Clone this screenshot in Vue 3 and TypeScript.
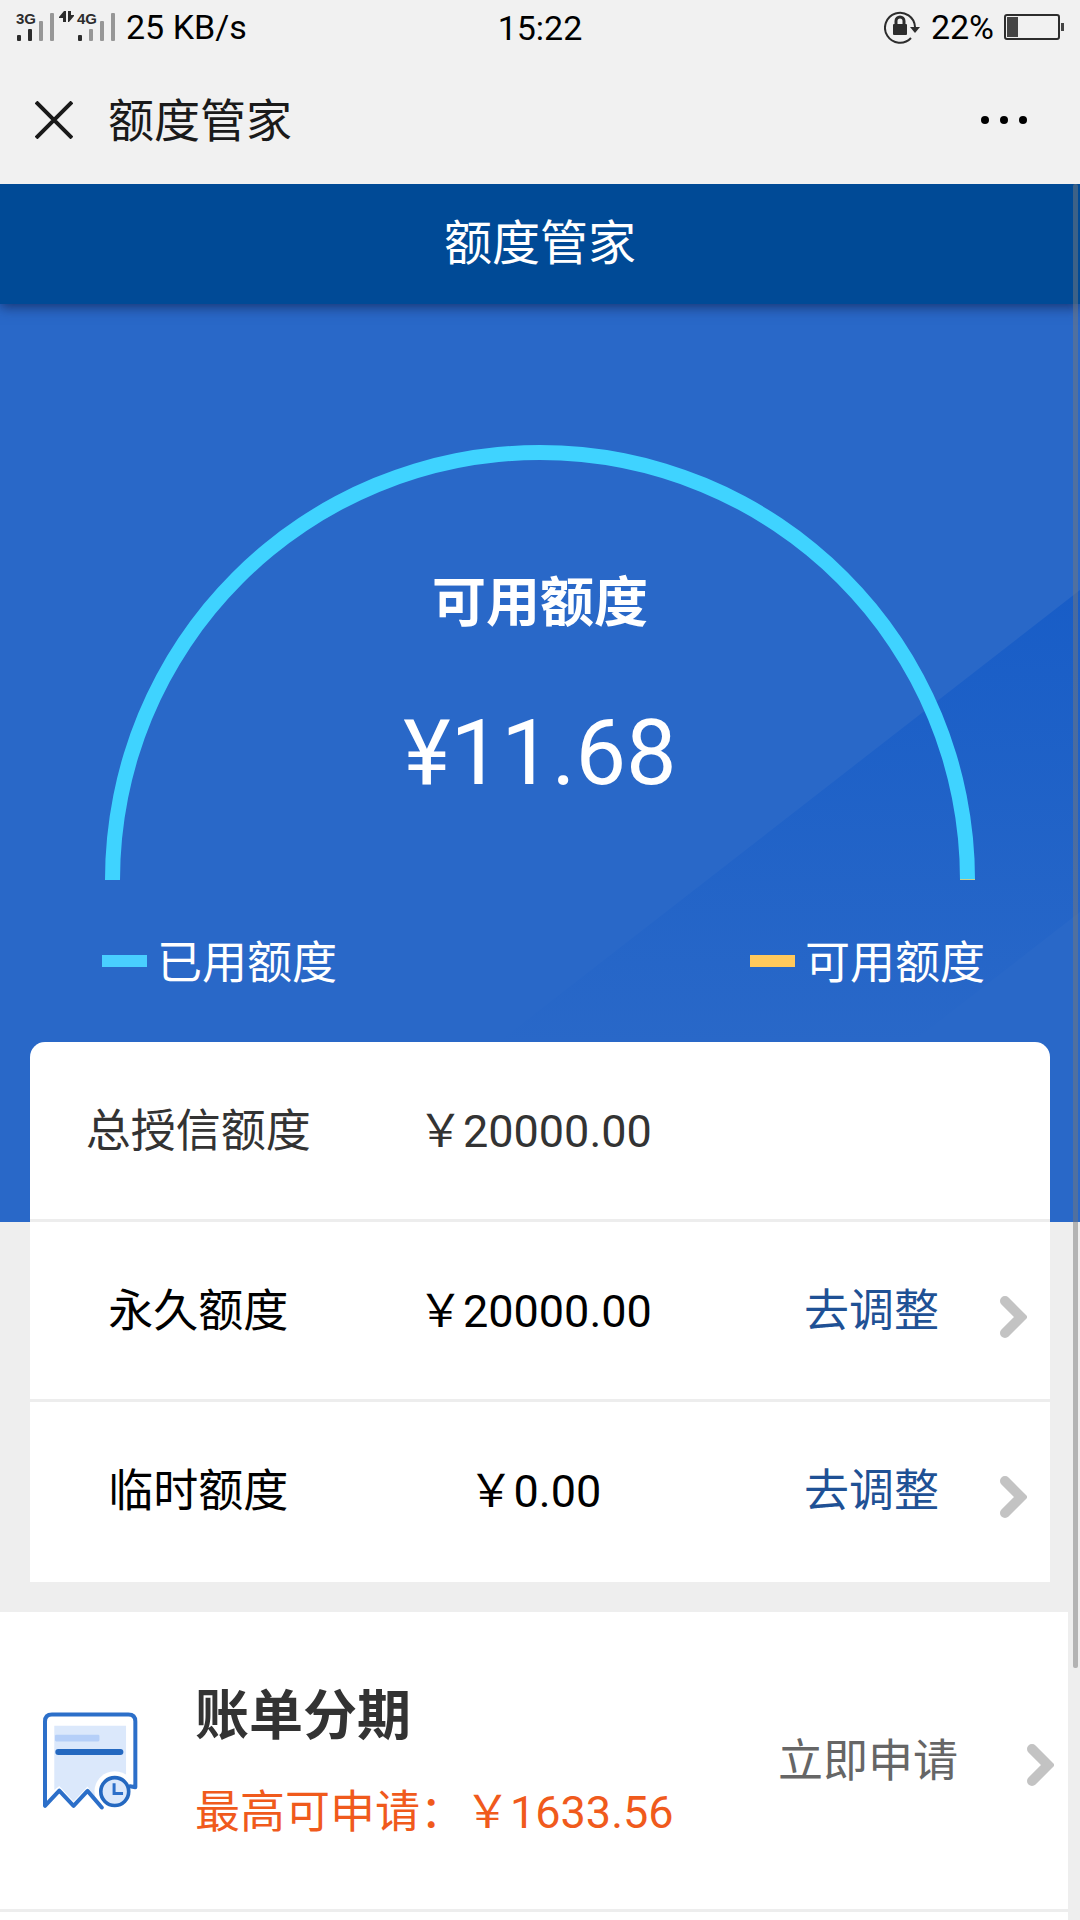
<script setup lang="ts">
interface LimitRow {
  label: string
  value: string
  action?: string
}

const rows: LimitRow[] = [
  { label: '总授信额度', value: '￥20000.00' },
  { label: '永久额度', value: '￥20000.00', action: '去调整' },
  { label: '临时额度', value: '￥0.00', action: '去调整' },
]

const legend = [
  { label: '已用额度', tone: 'used' },
  { label: '可用额度', tone: 'free' },
]
</script>

<template>
  <div class="app">
    <div class="status">
      <div class="status-left">
        <svg class="signal" width="102" height="32" viewBox="0 0 102 32" aria-hidden="true">
          <g fill="#2d2d2d">
            <text x="0" y="13" class="net">3G</text>
            <rect x="1" y="24" width="4" height="6" rx="1" />
            <rect x="12" y="18" width="4" height="12" rx="1" />
            <path d="M43 6L48 0H50V11H47V7H43Z" />
            <path d="M52 0H55V4H58V5L53 11H52Z" />
            <text x="61" y="13" class="net">4G</text>
            <rect x="62" y="24" width="4" height="6" rx="1" />
          </g>
          <g fill="#979797">
            <rect x="23" y="10" width="4" height="20" rx="1" />
            <rect x="34" y="2" width="4" height="28" rx="1" />
            <rect x="73" y="18" width="4" height="12" rx="1" />
            <rect x="84" y="10" width="4" height="20" rx="1" />
            <rect x="95" y="2" width="4" height="28" rx="1" />
          </g>
        </svg>
        <span>25 KB/s</span>
      </div>
      <span class="clock">15:22</span>
      <div class="status-right">
        <svg width="37" height="34" viewBox="0 0 37 34" aria-hidden="true">
          <path d="M27 28A15 15 0 1 1 31 17" fill="none" stroke="#2d2d2d" stroke-width="2" />
          <path d="M26 17H36L31 23Z" fill="#2d2d2d" />
          <rect x="9" y="14" width="14" height="11" rx="1" fill="#2d2d2d" />
          <path d="M12 15V11A4 4 0 0 1 20 11V15" fill="none" stroke="#2d2d2d" stroke-width="3" />
        </svg>
        <span>22%</span>
        <svg class="battery" width="60" height="26" viewBox="0 0 60 26" aria-hidden="true">
          <rect x="1" y="1" width="54" height="24" rx="2" fill="none" stroke="#2d2d2d" stroke-width="2" />
          <rect x="3" y="3" width="11" height="20" fill="#454545" />
          <rect x="57" y="9" width="3" height="8" fill="#454545" />
        </svg>
      </div>
    </div>

    <header class="titlebar">
      <button class="icon-btn" type="button" aria-label="关闭">
        <svg width="38" height="38" viewBox="0 0 38 38">
          <path d="M1 1L37 37M37 1L1 37" stroke="#1a1a1a" stroke-width="4" />
        </svg>
      </button>
      <span class="titlebar-text">额度管家</span>
      <button class="icon-btn" type="button" aria-label="更多">
        <svg width="48" height="10" viewBox="0 0 48 10">
          <circle cx="5" cy="5" r="4" />
          <circle cx="24" cy="5" r="4" />
          <circle cx="43" cy="5" r="4" />
        </svg>
      </button>
    </header>

    <main class="page">
      <h1 class="heading">额度管家</h1>

      <section class="hero">
        <svg class="sheen" viewBox="0 0 1080 918" preserveAspectRatio="none" aria-hidden="true">
          <defs>
            <linearGradient id="sheen" gradientUnits="userSpaceOnUse" x1="0" y1="288" x2="0" y2="740">
              <stop offset="0" stop-color="#185dc7" />
              <stop offset="1" stop-color="#185dc7" stop-opacity="0" />
            </linearGradient>
          </defs>
          <path d="M1080 286L496 740H910L1080 608Z" fill="url(#sheen)" />
        </svg>
        <div class="gauge">
          <svg class="arc" viewBox="0 0 870 435" aria-hidden="true">
            <path d="M0 435A435 435 0 0 1 870 435H855A420 420 0 0 0 15 435Z" fill="#3fd3ff" />
            <rect x="855" y="434" width="15" height="1" fill="#c9d08c" />
          </svg>
          <div class="gauge-text">
            <h2>可用额度</h2>
            <p>¥11.68</p>
          </div>
        </div>
        <ul class="legend">
          <li v-for="item in legend" :key="item.tone">
            <i :class="item.tone"></i>{{ item.label }}
          </li>
        </ul>
      </section>

      <table class="card">
        <tbody>
          <tr v-for="row in rows" :key="row.label">
            <th scope="row">{{ row.label }}</th>
            <td>{{ row.value }}</td>
            <td>
              <a v-if="row.action" href="#" class="adjust">
                <span>{{ row.action }}</span>
                <svg class="chevron" width="28" height="44" viewBox="0 0 28 44" aria-hidden="true">
                  <path d="M6 6L22 22L6 38" />
                </svg>
              </a>
            </td>
            <td></td>
          </tr>
        </tbody>
      </table>

      <a href="#" class="offer">
        <svg class="receipt" width="95" height="98" viewBox="128 456 286 294" aria-hidden="true">
          <path d="M162 497H378V690L305 743L262 680L220 725L177 678L162 690Z" fill="#dbe8fb" />
          <rect x="164" y="524" width="134" height="20" rx="4" fill="#b5cff8" />
          <path d="M174 576H361" stroke="#2468c0" stroke-width="18" stroke-linecap="round" />
          <circle cx="344" cy="695" r="61" fill="#fff" />
          <path d="M305 743L262 693L220 738L177 692L134 738V484Q134 463 155 463H385Q406 463 406 484V682L390 679" fill="none" stroke="#2c6fc9" stroke-width="12" stroke-linejoin="round" stroke-linecap="round" />
          <circle cx="344" cy="695" r="42" fill="#dbe8fb" stroke="#2468c0" stroke-width="11" />
          <path d="M342 670V701H369" fill="none" stroke="#2c6fc9" stroke-width="9" />
        </svg>
        <span class="offer-text">
          <strong>账单分期</strong>
          <span class="offer-max">最高可申请：￥1633.56</span>
        </span>
        <span class="apply">立即申请</span>
        <svg class="chevron" width="28" height="44" viewBox="0 0 28 44" aria-hidden="true">
          <path d="M6 6L22 22L6 38" />
        </svg>
      </a>
      <div class="scroll-thumb"></div>
    </main>
  </div>
</template>

<style>
body {
  margin: 0;
  background: #fff;
}
</style>

<style scoped>
.app {
  min-height: 100vh;
  display: flex;
  flex-direction: column;
  font-family: Roboto, "Noto Sans CJK SC", sans-serif;
  font-size: 45px;
  line-height: 60px;
  color: #000;
  background: #fff;
  overflow: hidden;
}

.status {
  display: grid;
  grid-template-columns: 1fr auto 1fr;
  align-items: center;
  height: 56px;
  padding: 0 16px;
  background: #f1f1f1;
  font-size: 34px;
  line-height: 56px;
}

.status-left,
.status-right {
  display: flex;
  align-items: center;
  height: 54px;
  line-height: 54px;
  align-self: start;
}

.status-left {
  gap: 8px;
}

.status-right {
  justify-content: flex-end;
  gap: 10px;
}

.net {
  font: bold 15px "Liberation Sans", sans-serif;
}

.titlebar {
  display: flex;
  align-items: center;
  height: 128px;
  padding: 0 52px 0 35px;
  background: #f1f1f1;
  font-size: 46px;
  color: #1a1a1a;
}

.titlebar-text {
  flex: 1;
  margin-left: 35px;
  padding-top: 2px;
}

.icon-btn {
  display: flex;
  padding: 0;
  border: 0;
  background: none;
}

.page {
  position: relative;
  flex: 1;
  overflow: hidden;
  background:
    linear-gradient(#eee, #eee) right / 12px 100% no-repeat,
    linear-gradient(#eee, #eee) top / 100% 1428px no-repeat;
}

.heading {
  position: relative;
  z-index: 1;
  margin: 0;
  padding: 2px 0;
  font-size: 48px;
  font-weight: 400;
  line-height: 116px;
  text-align: center;
  color: #fff;
  background: #004a96;
  box-shadow: 0 3px 12px rgba(20, 40, 90, 0.8);
}

.hero {
  position: relative;
  padding: 141px 0 231px;
  background: #2968c8;
  color: #fff;
}

.sheen {
  position: absolute;
  inset: 0;
  width: 100%;
  height: 100%;
}

.gauge {
  position: relative;
  display: grid;
  margin: 0 105px;
}

.arc {
  grid-area: 1 / 1;
  display: block;
  width: 100%;
}

.gauge-text {
  grid-area: 1 / 1;
  padding-top: 123px;
  text-align: center;
}

.gauge-text h2 {
  margin: 0;
  font-size: 54px;
  line-height: 72px;
}

.gauge-text p {
  margin: 60px 0 0;
  font-size: 90px;
  line-height: 108px;
}

.legend {
  position: relative;
  display: flex;
  justify-content: space-between;
  margin: 57px 95px 0 102px;
  padding: 0;
  list-style: none;
  line-height: 54px;
}

.legend li {
  display: flex;
  align-items: center;
  gap: 10px;
}

.legend i {
  width: 45px;
  height: 12px;
  margin-bottom: 6px;
}

.used {
  background: #49cfff;
}

.free {
  background: #ffc95c;
}

.card {
  position: relative;
  width: calc(100% - 60px);
  margin: -180px 30px 0;
  table-layout: fixed;
  border-collapse: separate;
  border-spacing: 0;
  border-radius: 15px 15px 0 0;
  background: #fff;
}

.card th,
.card td {
  width: 33%;
  height: 175px;
  padding: 2px 0 0;
  border-bottom: 3px solid #ededed;
  font-weight: 400;
  text-align: center;
  white-space: nowrap;
}

.card td:last-child {
  width: 1%;
}

.card tr:first-child {
  color: #333;
}

.card tr:last-child > * {
  border-bottom-color: #fff;
}

.adjust {
  display: grid;
  grid-template-columns: 1fr auto 1fr;
  align-items: center;
  color: #1f5195;
  text-decoration: none;
}

.adjust span {
  grid-column: 2;
}

.adjust .chevron {
  justify-self: end;
  margin: 10px 13px 0 0;
}

.chevron {
  fill: none;
  stroke: #c3c3c3;
  stroke-width: 10;
  stroke-linecap: round;
}

.offer {
  display: flex;
  align-items: center;
  height: 297px;
  margin-right: 12px;
  padding: 0 14px 0 43px;
  border-top: 30px solid #eee;
  border-bottom: 3px solid #ededed;
  color: #666;
  background: #fff;
  text-decoration: none;
}

.offer-text {
  flex: 1;
  display: flex;
  flex-direction: column;
  gap: 30px;
  margin-left: 57px;
  padding-top: 2px;
}

.offer-text strong {
  font-size: 54px;
  line-height: 72px;
  color: #333;
}

.offer-max {
  color: #f05a1c;
}

.apply {
  padding-top: 2px;
}

.offer > .chevron {
  margin: 8px 0 0 68px;
}

.scroll-thumb {
  position: absolute;
  z-index: 2;
  top: 0;
  right: 2px;
  width: 5px;
  height: 1484px;
  border-radius: 2px;
  background: rgba(120, 120, 120, 0.5);
}
</style>
